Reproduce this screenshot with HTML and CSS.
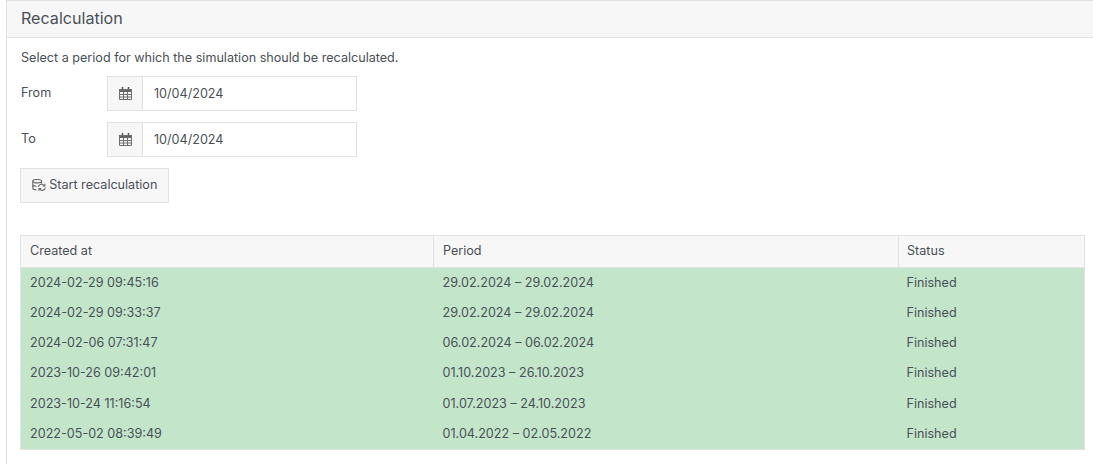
FILE: index.html
```html
<!DOCTYPE html>
<html lang="en">
<head>
<meta charset="utf-8">
<title>Recalculation</title>
<link rel="stylesheet" href="styles.css">
</head>
<body>
<section class="panel">
  <header class="panel-heading">Recalculation</header>
  <div class="panel-body">
    <p class="intro">Select a period for which the simulation should be recalculated.</p>
    <div class="form-row">
      <label class="form-label">From</label>
      <div class="input-group">
        <span class="addon"><svg class="cal" width="15" height="14" viewBox="0 0 15 14"><path d="M2 2h13v3H2z" fill="#666"/><path d="M5.5 0v2.5M11.5 0v2.5" stroke="#555" stroke-width="1.5"/><path d="M2.5 2.5h12v10h-12zM2.5 7.5h12M2.5 10h12M6.5 5v7.5M10.5 5v7.5" fill="none" stroke="#6f6f6f" stroke-width="1"/></svg></span>
        <span class="input">10/04/2024</span>
      </div>
    </div>
    <div class="form-row">
      <label class="form-label">To</label>
      <div class="input-group">
        <span class="addon"><svg class="cal" width="15" height="14" viewBox="0 0 15 14"><path d="M2 2h13v3H2z" fill="#666"/><path d="M5.5 0v2.5M11.5 0v2.5" stroke="#555" stroke-width="1.5"/><path d="M2.5 2.5h12v10h-12zM2.5 7.5h12M2.5 10h12M6.5 5v7.5M10.5 5v7.5" fill="none" stroke="#6f6f6f" stroke-width="1"/></svg></span>
        <span class="input">10/04/2024</span>
      </div>
    </div>
    <button class="btn" type="button"><svg width="14" height="12" viewBox="0 0 14 12" fill="none" stroke="#666" stroke-width="1.1"><ellipse cx="5.2" cy="2.2" rx="4.4" ry="1.7"/><path d="M.8 2.2v7c0 .9 1.6 1.6 3.6 1.7M.8 5.6c0 .9 1.6 1.6 3.8 1.7M9.6 2.2v2.3"/><path d="M6.4 8a3.2 3.2 0 0 1 5.8-1.4M13.4 8.6a3.2 3.2 0 0 1-5.8 1.4"/><path d="M12.8 4.8v2.2h-2.2M7 11.8V9.6h2.2"/></svg> Start recalculation</button>
    <table class="runs">
      <colgroup><col class="c1"><col class="c2"><col class="c3"></colgroup>
      <thead><tr><th>Created at</th><th>Period</th><th>Status</th></tr></thead>
      <tbody>
        <tr><td>2024-02-29 09:45:16</td><td>29.02.2024 – 29.02.2024</td><td>Finished</td></tr>
        <tr><td>2024-02-29 09:33:37</td><td>29.02.2024 – 29.02.2024</td><td>Finished</td></tr>
        <tr><td>2024-02-06 07:31:47</td><td>06.02.2024 – 06.02.2024</td><td>Finished</td></tr>
        <tr><td>2023-10-26 09:42:01</td><td>01.10.2023 – 26.10.2023</td><td>Finished</td></tr>
        <tr><td>2023-10-24 11:16:54</td><td>01.07.2023 – 24.10.2023</td><td>Finished</td></tr>
        <tr><td>2022-05-02 08:39:49</td><td>01.04.2022 – 02.05.2022</td><td>Finished</td></tr>
      </tbody>
    </table>
  </div>
</section>
</body>
</html>
```

FILE: styles.css
```css
html, body { margin: 0; padding: 0; background: #fff; }
body {
  font-family: Inter, "Liberation Sans", sans-serif;
  font-size: 12.6px;
  color: #495057;
  overflow: hidden;
  height: 464px;
}
.panel {
  margin-left: 6px;
  border-left: 1px solid #e2e2e2;
  border-top: 1px solid #e2e2e2;
  height: 463px;
}
.panel-heading {
  box-sizing: border-box;
  height: 37px;
  padding: 0 14px;
  line-height: 35px;
  font-size: 16.1px;
  background: #f7f7f7;
  border-bottom: 1px solid #e2e2e2;
}
.panel-body { padding: 12px 8px 0 13px; }
.intro { margin: 0 0 10px 1px; line-height: 16px; }
.form-row { display: flex; align-items: flex-start; height: 35px; margin-bottom: 11px; }
.form-label { width: 86px; padding-left: 1px; line-height: 33px; }
.input-group { display: flex; width: 250px; height: 35px; box-sizing: border-box; border: 1px solid #e2e2e2; }
.addon { display: flex; align-items: center; justify-content: center; width: 33px; padding-right: 1px; background: #f7f7f7; border-right: 1px solid #e2e2e2; }
.input { padding-left: 11px; line-height: 33px; }
.btn {
  display: block;
  box-sizing: border-box;
  height: 35px;
  width: 149px;
  padding: 0 0 3px;
  font: inherit;
  color: inherit;
  background: #f7f7f7;
  border: 1px solid #e2e2e2;
}
.btn svg { vertical-align: -2px; }
.runs {
  margin-top: 31.9px;
  width: 1065px;
  table-layout: fixed;
  border-collapse: collapse;
  border: 1px solid #e2e2e2;
}
.c1 { width: 413px; }
.c2 { width: 465px; }
.runs th {
  box-sizing: border-box;
  height: 32px;
  padding: 0 9px 2px;
  font-weight: 400;
  text-align: left;
  background: #f7f7f7;
  border-right: 1px solid #e2e2e2;
  border-bottom: 1px solid #e2e2e2;
}
.runs td {
  box-sizing: border-box;
  height: 30.17px;
  padding: 0 9px;
  background: #c3e6cb;
}
.runs tbody tr:last-child td { height: 31.4px; padding-bottom: 1px; }
.runs th:last-child, .runs td:last-child { padding-left: 8px; }
```
